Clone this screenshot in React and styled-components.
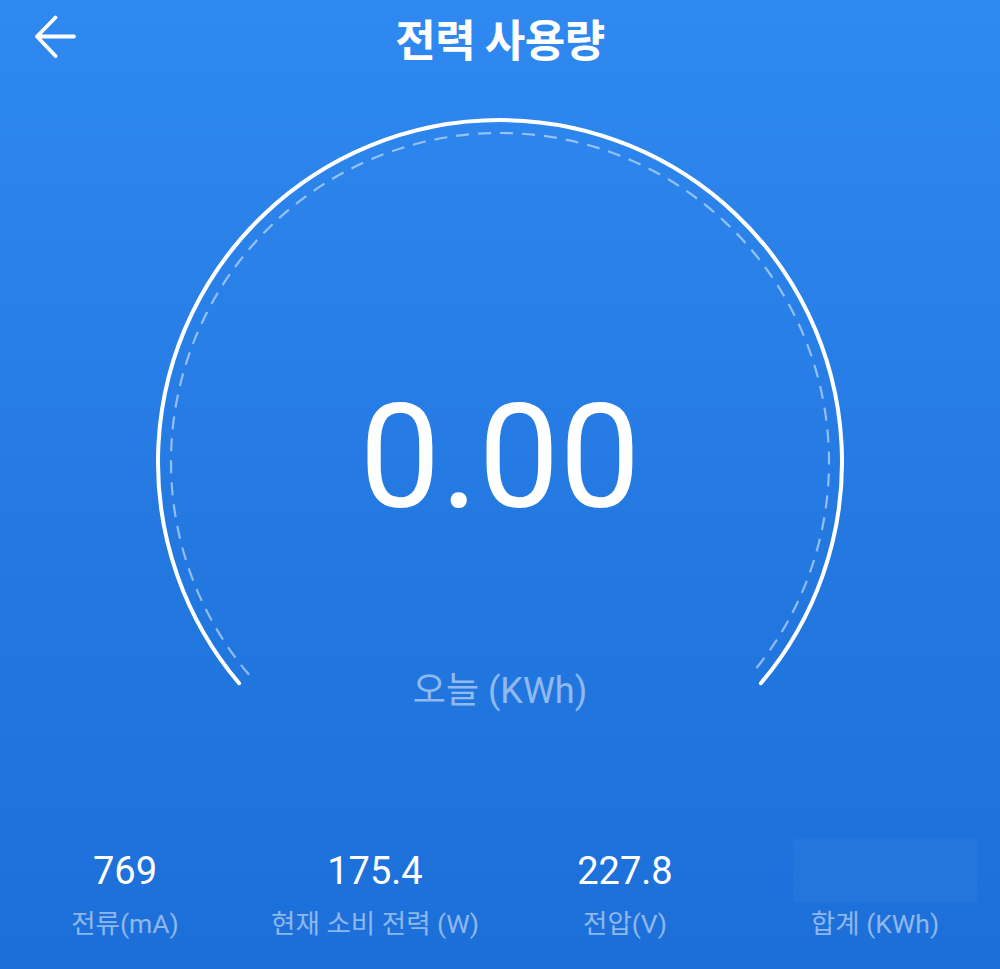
import React from "react";
import styled, { createGlobalStyle } from "styled-components";

const GlobalStyle = createGlobalStyle`
  html, body { margin: 0; padding: 0; }
  body { font-family: Roboto, "Noto Sans CJK KR", sans-serif; }
`;

const Page = styled.div`
  width: 1000px;
  height: 969px;
  display: flex;
  flex-direction: column;
  background: linear-gradient(180deg, #2f89f0 0%, #2479e1 55%, #1c6fd9 100%);
  color: #fff;
  overflow: hidden;
`;

const Header = styled.header`
  height: 76px;
  display: grid;
  grid-template-columns: 1fr auto 1fr;
  align-items: center;
  padding: 0 33px;
  box-sizing: border-box;
`;

const BackButton = styled.button`
  justify-self: start;
  width: 44px;
  height: 48px;
  padding: 0;
  border: 0;
  background: transparent;
  display: flex;
  align-items: center;
  justify-content: center;
  cursor: pointer;
`;

const Title = styled.h1`
  margin: 0;
  font-family: "Noto Sans CJK KR", sans-serif;
  font-weight: 700;
  font-size: 44px;
  line-height: 1;
  letter-spacing: -0.5px;
`;

const GaugeArea = styled.section`
  position: relative;
  height: 654px;
  display: flex;
  flex-direction: column;
  align-items: center;
`;

const GaugeDrawing = styled.svg`
  position: absolute;
  inset: 0;
  width: 1000px;
  height: 654px;
`;

const Reading = styled.div`
  position: relative;
  margin-top: 310px;
  font-family: Roboto, sans-serif;
  font-weight: 400;
  font-size: 144px;
  line-height: 1;
`;

const Unit = styled.div`
  position: relative;
  margin-top: 143px;
  font-family: Roboto, "Noto Sans CJK KR", sans-serif;
  font-size: 36px;
  line-height: 1;
  color: rgba(255, 255, 255, 0.5);
`;

const Stats = styled.section`
  display: grid;
  grid-template-columns: repeat(4, 1fr);
  padding-top: 109px;
`;

const Stat = styled.div`
  display: flex;
  flex-direction: column;
  align-items: center;
`;

const ValueSlot = styled.div`
  height: 63px;
  display: flex;
  align-items: center;
  justify-content: center;
`;

const Value = styled.span`
  font-family: Roboto, sans-serif;
  font-size: 38px;
  line-height: 1;
  color: #fff;
`;

const Placeholder = styled.div`
  width: 184px;
  height: 63px;
  margin-left: 20px;
  background: rgba(255, 255, 255, 0.035);
`;

const Label = styled.span`
  margin-top: 9px;
  font-family: Roboto, "Noto Sans CJK KR", sans-serif;
  font-size: 26.5px;
  line-height: 1;
  color: rgba(255, 255, 255, 0.5);
  white-space: nowrap;
`;

const stats = [
  { value: "769", label: "전류(mA)" },
  { value: "175.4", label: "현재 소비 전력 (W)" },
  { value: "227.8", label: "전압(V)" },
  { value: null, label: "합계 (KWh)" },
];

export default function App() {
  return (
    <>
      <GlobalStyle />
      <Page>
        <Header>
          <BackButton aria-label="back">
            <svg width="42" height="46" viewBox="0 0 42 46" fill="none">
              <path
                d="M40 21.5 H3.5 M21.5 2.5 L3 21.5 L21.5 41"
                stroke="#fff"
                strokeWidth="3.8"
                strokeLinecap="round"
                strokeLinejoin="round"
              />
            </svg>
          </BackButton>
          <Title>전력 사용량</Title>
          <span />
        </Header>
        <GaugeArea>
          <GaugeDrawing viewBox="0 0 1000 654" fill="none">
            <path
              d="M 239.1 607.2 A 342 342 0 1 1 760.9 607.2"
              stroke="#fff"
              strokeWidth="4"
              strokeLinecap="round"
            />
            <path
              d="M 249.1 598.8 A 329 329 0 1 1 750.9 598.8"
              stroke="rgba(255,255,255,0.5)"
              strokeWidth="2.2"
              strokeDasharray="13 9"
            />
          </GaugeDrawing>
          <Reading>0.00</Reading>
          <Unit>오늘 (KWh)</Unit>
        </GaugeArea>
        <Stats>
          {stats.map((s) => (
            <Stat key={s.label}>
              <ValueSlot>
                {s.value ? <Value>{s.value}</Value> : <Placeholder />}
              </ValueSlot>
              <Label>{s.label}</Label>
            </Stat>
          ))}
        </Stats>
      </Page>
    </>
  );
}
